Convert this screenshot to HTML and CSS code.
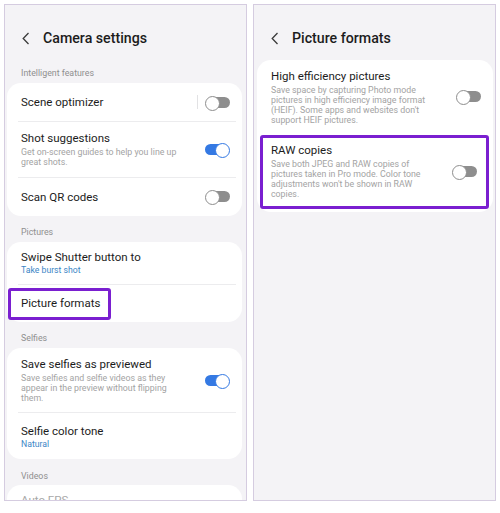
FILE: index.html
```html
<!DOCTYPE html>
<html>
<head>
<meta charset="utf-8">
<link rel="stylesheet" href="styles.css">
</head>
<body>
<div class="screens">
  <section class="panel">
    <header class="header">
      <svg class="back" width="8" height="13" viewBox="0 0 8 13"><path d="M6.5 1 L1.2 6.5 L6.5 12" fill="none" stroke="#3a3a3a" stroke-width="1.3"/></svg>
      <h1 class="title">Camera settings</h1>
    </header>
    <div class="label">Intelligent features</div>
    <div class="card">
      <div class="row row-s1">
        <div class="text"><div class="name">Scene optimizer</div></div>
        <span class="vsep"></span>
        <span class="toggle"></span>
      </div>
      <div class="row row-d2 sep">
        <div class="text">
          <div class="name">Shot suggestions</div>
          <div class="desc">Get on-screen guides to help you line up<br>great shots.</div>
        </div>
        <span class="toggle on"></span>
      </div>
      <div class="row row-s2 sep">
        <div class="text"><div class="name">Scan QR codes</div></div>
        <span class="toggle"></span>
      </div>
    </div>
    <div class="label">Pictures</div>
    <div class="card">
      <div class="row row-sub1">
        <div class="text">
          <div class="name">Swipe Shutter button to</div>
          <div class="sub">Take burst shot</div>
        </div>
      </div>
      <div class="row row-pf sep">
        <div class="text"><div class="name">Picture formats</div></div>
        <span class="mark-left"></span>
      </div>
    </div>
    <div class="label">Selfies</div>
    <div class="card">
      <div class="row row-d3">
        <div class="text">
          <div class="name">Save selfies as previewed</div>
          <div class="desc">Save selfies and selfie videos as they<br>appear in the preview without flipping<br>them.</div>
        </div>
        <span class="toggle on"></span>
      </div>
      <div class="row row-sub2 sep">
        <div class="text">
          <div class="name">Selfie color tone</div>
          <div class="sub">Natural</div>
        </div>
      </div>
    </div>
    <div class="label label-v">Videos</div>
    <div class="card">
      <div class="row row-fps">
        <div class="text"><div class="name faded">Auto FPS</div></div>
      </div>
    </div>
  </section>

  <section class="panel">
    <header class="header header-r">
      <svg class="back" width="8" height="13" viewBox="0 0 8 13"><path d="M6.5 1 L1.2 6.5 L6.5 12" fill="none" stroke="#3a3a3a" stroke-width="1.3"/></svg>
      <h1 class="title">Picture formats</h1>
    </header>
    <div class="card card-r">
      <div class="row row-heif">
        <div class="text">
          <div class="name">High efficiency pictures</div>
          <div class="desc">Save space by capturing Photo mode<br>pictures in high efficiency image format<br>(HEIF). Some apps and websites don't<br>support HEIF pictures.</div>
        </div>
        <span class="toggle"></span>
      </div>
      <div class="row row-raw">
        <div class="text">
          <div class="name">RAW copies</div>
          <div class="desc">Save both JPEG and RAW copies of<br>pictures taken in Pro mode. Color tone<br>adjustments won't be shown in RAW<br>copies.</div>
        </div>
        <span class="toggle"></span>
      </div>
    </div>
  </section>
</div>
</body>
</html>
```

FILE: styles.css
```css
* { box-sizing: border-box; margin: 0; padding: 0; }
html, body { background: #ffffff; }
body {
  font-family: Roboto, "Noto Sans", "Liberation Sans", sans-serif;
  color: #1e1e1e;
}
.screens {
  display: flex;
  gap: 6px;
  padding: 4px 4px 0 4px;
}
.panel {
  width: 243px;
  height: 497px;
  background: #f4f3f6;
  border: 1px solid #d5cce0;
  overflow: hidden;
  display: flex;
  flex-direction: column;
}
.header {
  display: flex;
  align-items: center;
  padding: 25px 0 11px 17px;
  height: 52px;
}
.header-r { height: 55px; padding-bottom: 14px; }
.back { margin-right: 13px; flex: none; }
.title {
  font-size: 14.2px;
  font-weight: 500;
  line-height: 16px;
  color: #1c1c1c;
}
.label {
  font-size: 8.8px;
  line-height: 12px;
  color: #8f8f8f;
  padding: 10px 0 4px 16px;
  height: 26px;
}
.label-v { padding-top: 11px; }
.card {
  background: #ffffff;
  border-radius: 14px;
  margin: 0 4px 0 2px;
  flex: none;
}
.card-r { margin: 0 2px 0 3px; padding-bottom: 3px; }
.row {
  position: relative;
  display: flex;
  align-items: center;
  padding: 0 12px 0 14px;
}
.row.sep::before {
  content: "";
  position: absolute;
  top: 0;
  left: 11px;
  right: 6px;
  border-top: 1px solid #ececee;
}
.text { flex: 1; min-width: 0; }
.name {
  font-size: 11.5px;
  line-height: 14px;
  color: #1c1c1c;
  white-space: nowrap;
}
.faded { color: #a8a8a8; }
.desc {
  font-size: 8.8px;
  line-height: 10px;
  color: #a3a3a3;
  margin-top: 2px;
  white-space: nowrap;
}
.sub {
  font-size: 8.7px;
  line-height: 12px;
  color: #3c86c6;
}
.row-s1 { height: 38px; }
.row-s2 { height: 39px; }
.row-d2 { height: 56px; padding-top: 0; }
.row-sub1 { height: 42px; }
.row-pf { height: 38px; }
.row-d3 { height: 64px; }
.row-sub2 { height: 47px; padding-top: 2px; }
.row-fps { height: 38px; align-items: flex-start; padding-top: 8px; }
.row-heif { height: 75px; padding-bottom: 2px; }
.row-raw {
  height: 74px;
  margin: 0 4px 0 3px;
  padding: 0 8px 2px 8px;
  border: 3px solid #7a1fd0;
  border-radius: 3px;
}
.row-raw .toggle { margin-right: 1px; }
.mark-left {
  position: absolute;
  left: 1px;
  top: 4px;
  width: 103px;
  height: 32px;
  border: 3px solid #7a1fd0;
  border-radius: 3px;
}
.vsep {
  width: 1px;
  height: 14px;
  background: #e2e2e4;
  margin-right: 7px;
}
.toggle {
  position: relative;
  flex: none;
  width: 25px;
  height: 13px;
}
.toggle::before {
  content: "";
  position: absolute;
  left: 2px;
  right: 0;
  top: 1px;
  height: 11px;
  border-radius: 6px;
  background: #8e8e8e;
}
.toggle::after {
  content: "";
  position: absolute;
  left: 0;
  top: 0;
  width: 13px;
  height: 13px;
  border-radius: 50%;
  background: #ffffff;
  border: 1.3px solid #8e8e8e;
}
.toggle.on::before { left: 0; right: 2px; background: #3479e3; }
.toggle.on::after { left: auto; right: 0; border-color: #3479e3; }
```
